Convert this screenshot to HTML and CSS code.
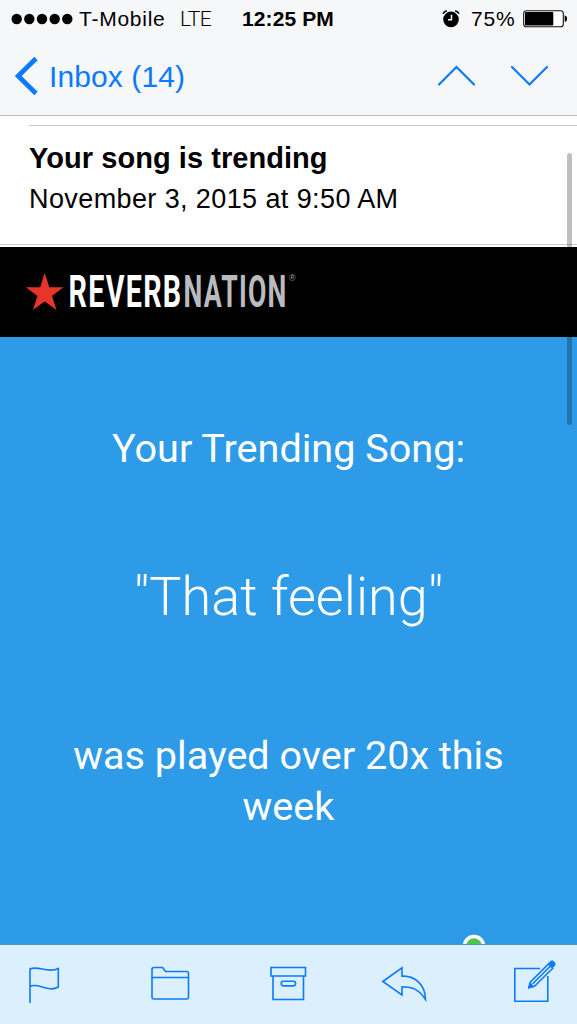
FILE: index.html
```html
<!DOCTYPE html>
<html lang="en">
<head>
  <meta charset="UTF-8">
  <title>Your song is trending</title>
  <link rel="stylesheet" href="styles.css">
</head>
<body>
  <div class="screen">
    <header class="top">
      <div class="status">
        <svg class="signal" width="62" height="12" viewBox="0 0 62 12">
          <circle cx="5.7" cy="6" r="5.2"/>
          <circle cx="18.3" cy="6" r="5.2"/>
          <circle cx="31" cy="6" r="5.2"/>
          <circle cx="43.7" cy="6" r="5.2"/>
          <circle cx="56.3" cy="6" r="5.2"/>
        </svg>
        <span class="carrier">T-Mobile</span>
        <span class="network">LTE</span>
        <span class="time">12:25 PM</span>
        <svg class="alarm" width="18" height="18" viewBox="0 0 18 18">
          <circle cx="9" cy="9.4" r="7.8"/>
          <path d="M1 3.8Q2 1.4 4.8 .9M17 3.8Q16 1.4 13.2 .9" fill="none" stroke="#000" stroke-width="1.6"/>
          <path d="M9.5 4.8V9.8H6" fill="none" stroke="#fff" stroke-width="1.5"/>
        </svg>
        <span class="percent">75%</span>
        <svg class="battery" width="46" height="18" viewBox="0 0 46 18">
          <rect x=".7" y=".7" width="39.6" height="16" rx="2.8" fill="#fff" stroke="#111" stroke-width="1.1"/>
          <rect x="2" y="2" width="28.3" height="13.4" rx="1"/>
          <path d="M41.7 5.3Q44.2 6 44.2 8.7T41.7 12.1z"/>
        </svg>
      </div>
      <nav class="nav">
        <a class="back">
          <svg width="24" height="40" viewBox="0 0 24 40"><path d="M22 2.5L4.2 20L22 37.5" fill="none" stroke="#0a7aff" stroke-width="4.8"/></svg>
          <span>Inbox (14)</span>
        </a>
        <svg class="arrows" width="112" height="24" viewBox="0 0 112 24">
          <path d="M2 20.5L19.5 3L37 20.5M75 3L92.5 20.5L110 3" fill="none" stroke="#0a7aff" stroke-width="2.2" stroke-linecap="round"/>
        </svg>
      </nav>
    </header>

    <section class="subject">
      <h1>Your song is trending</h1>
      <p>November 3, 2015 at 9:50 AM</p>
    </section>

    <div class="brand">
      <svg class="star" width="38" height="38" viewBox="0 0 38 38">
        <path d="M18.7 0L23.3 14.2H37.5L26 23L30.5 37L18.7 28.4L6.9 37L11.5 23L0 14.2H14.2z" fill="#e73529"/>
      </svg>
      <svg class="wordmark" width="218" height="52" viewBox="0 0 218 52">
        <text class="reverb" x="-.5" y="40.5" textLength="114" lengthAdjust="spacingAndGlyphs">REVERB</text>
        <text class="nation" x="114.5" y="40.5" textLength="104" lengthAdjust="spacingAndGlyphs">NATION</text>
      </svg>
      <span class="reg">®</span>
    </div>

    <main class="message">
      <p class="lead">Your Trending Song:</p>
      <p class="song">"That feeling"</p>
      <p class="plays">was played over 20x this week</p>
      <svg class="badge" width="24" height="10" viewBox="0 0 24 10">
        <circle cx="12" cy="12" r="9.5" fill="#4cc552" stroke="#fff" stroke-width="3.6"/>
      </svg>
    </main>

    <footer class="toolbar">
      <svg class="flag" width="34" height="40" viewBox="0 0 34 40">
        <path d="M2 37V3C10 -1 20 8 30.3 2.5V21C20 27 10 16 2 20.5"/>
      </svg>
      <svg class="folder" width="40" height="36" viewBox="0 0 40 36">
        <path d="M2 11.5V3.5Q2 1.5 4 1.5H12.5L15.5 5.5H36.5Q38.5 5.5 38.5 7.5V31Q38.5 33 36.5 33H4Q2 33 2 31V11.5H38.5"/>
      </svg>
      <svg class="archive" width="38" height="36" viewBox="0 0 38 36">
        <path d="M2 1.5H36.5V10H2zM4 10V33.5H34.5V10"/>
        <rect x="12.2" y="15.3" width="14.4" height="4.6" rx="2.3"/>
      </svg>
      <svg class="reply" width="46" height="37" viewBox="0 0 46 37">
        <path d="M1.8 15.5L21 1.8V10.2C34 9.5 44.5 19 44.5 33.5C38.5 24 32 20.8 21 20.8V29z"/>
      </svg>
      <svg class="compose" width="46" height="44" viewBox="0 0 46 44">
        <path d="M28 9.5H2.8V42.2H35.8V17"/>
        <path d="M17 28.5L18.5 23L36.5 5L40.7 9.2L22.7 27z"/>
        <path d="M20.5 25L38.5 7"/>
        <path d="M37.5 4L39.2 2.5Q40.3 2 41.2 2.8L42.4 4Q43.2 5 42.5 6L41 7.5z" class="fill"/>
        <path d="M17 28.5L18 24.5L21 27.5z" class="fill"/>
      </svg>
    </footer>

    <div class="scrollbar"></div>
  </div>
</body>
</html>
```

FILE: styles.css
```css
* {
  box-sizing: border-box;
}

body {
  margin: 0;
  font-family: "Liberation Sans", Arial, sans-serif;
  color: #000;
}

svg {
  display: block;
  flex: none;
}

h1, p {
  margin: 0;
}

.screen {
  position: relative;
  display: flex;
  flex-direction: column;
  width: 577px;
  height: 1024px;
  overflow: hidden;
  background: #fff;
}

.top {
  height: 116px;
  background: #f6f7f9;
  border-bottom: 1px solid #b9babc;
}

.status {
  display: flex;
  align-items: center;
  height: 38px;
  padding-left: 11px;
  font-size: 21px;
  white-space: nowrap;
}

.signal {
  margin-top: -1px;
}

.carrier {
  width: 102px;
  padding-left: 6px;
  letter-spacing: 0.75px;
}

.network {
  width: 67px;
  padding-left: 5px;
  font-family: Roboto, sans-serif;
  font-weight: 300;
  letter-spacing: -0.5px;
}

.time {
  width: 200px;
  font-weight: bold;
  letter-spacing: 0.1px;
}

.percent {
  width: 63px;
  padding-left: 11px;
  letter-spacing: 0.8px;
}

.battery {
  margin-top: -1px;
}

.nav {
  display: flex;
  justify-content: space-between;
  height: 77px;
  padding: 18px 28px 0 14px;
}

.back {
  display: flex;
  gap: 11px;
  color: #0a7aff;
  font-size: 30px;
  line-height: 41px;
  letter-spacing: 0.1px;
}

.arrows {
  margin-top: 8px;
}

.subject {
  height: 131px;
  padding: 9px 0 0 29px;
  box-shadow: inset 0 -2px #fff, inset 0 -3px #c8c8c8;
}

.subject h1 {
  padding-top: 15px;
  border-top: 1px solid #c8c8c8;
  font-size: 29px;
  line-height: 34px;
  letter-spacing: 0.05px;
}

.subject p {
  padding-top: 9px;
  font-size: 27px;
  line-height: 31px;
  letter-spacing: 0.4px;
}

.brand {
  display: flex;
  height: 90px;
  padding: 19px 0 0 26px;
  background: #000;
}

.star {
  margin: 7px 5px 0 0;
}

.wordmark {
  overflow: visible;
}

.reverb, .nation {
  font-family: Roboto, sans-serif;
  font-size: 44px;
  font-weight: bold;
  letter-spacing: 2px;
  fill: #fff;
}

.nation {
  fill: #b9bbbf;
}

.reg {
  padding: 7px 0 0 2px;
  color: #a0a0a0;
  font-size: 9px;
  line-height: 11px;
}

.message {
  position: relative;
  height: 607px;
  padding: 86px 60px 0;
  background: #2d9be8;
  color: #fff;
  font-family: Roboto, sans-serif;
  font-size: 39.6px;
  line-height: 51px;
  text-align: center;
}

.song {
  margin: 88px 0 98px;
  font-size: 54px;
  font-weight: 300;
  line-height: 70px;
}

.badge {
  position: absolute;
  left: 462px;
  bottom: 0;
}

.toolbar {
  display: flex;
  align-items: flex-start;
  height: 80px;
  padding: 21px 0 0 28px;
  background: #dceffc;
  border-top: 1px solid #5f90b5;
}

.toolbar svg {
  fill: none;
  stroke: #0a7aff;
  stroke-width: 1.6;
}

.toolbar .fill {
  fill: #0a7aff;
}

.flag {
  margin-right: 88px;
}

.folder {
  margin-right: 79px;
}

.archive {
  margin-right: 74px;
}

.reply {
  margin-right: 85px;
}

.compose {
  margin-top: -7px;
}

.scrollbar {
  position: absolute;
  top: 153px;
  right: 5px;
  width: 5px;
  height: 272px;
  border-radius: 3px;
  background: rgba(0, 0, 0, 0.25);
}
```
